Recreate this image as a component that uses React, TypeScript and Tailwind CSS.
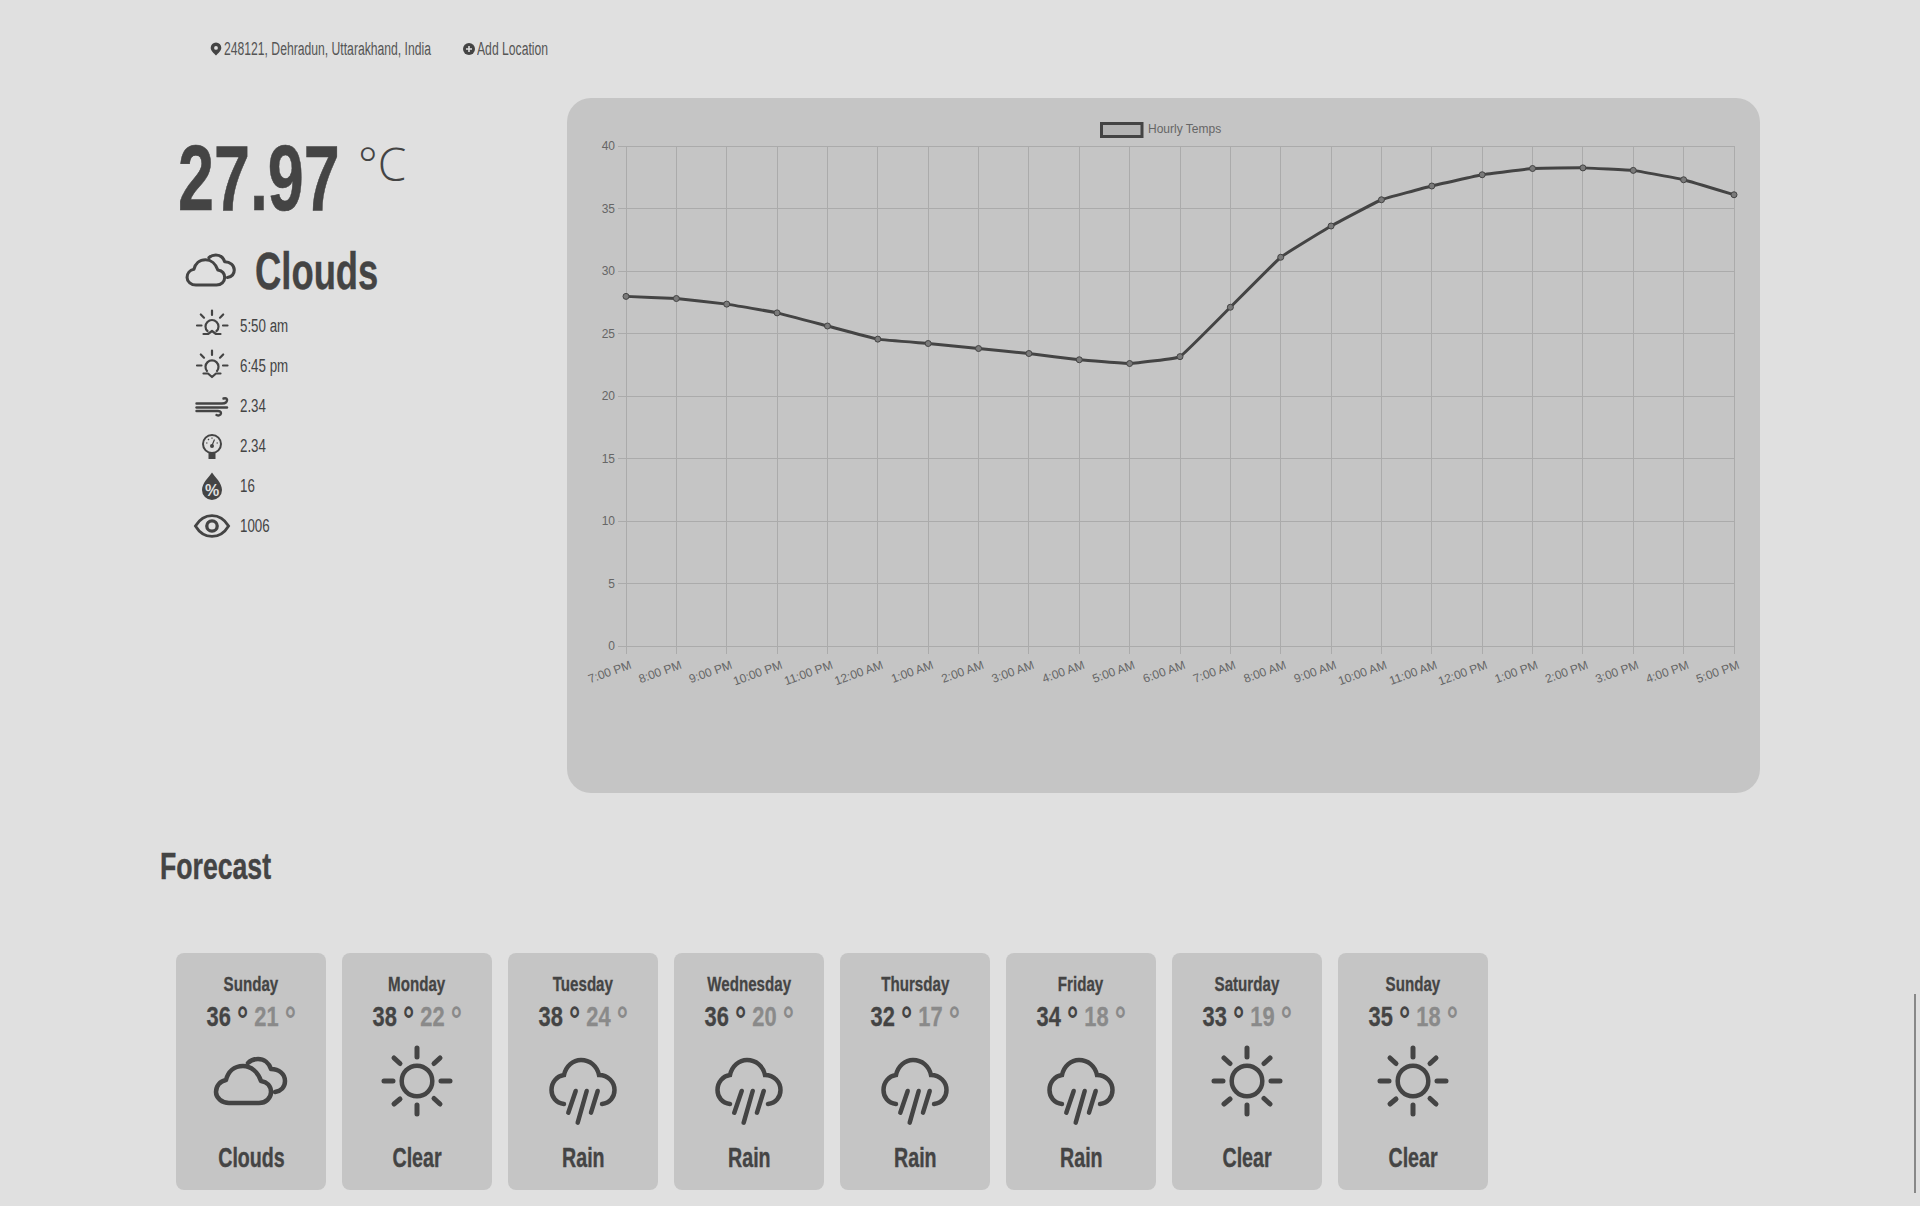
import React from "react";

const FONT = "font-['Liberation_Sans',Arial,sans-serif]";

const temps = [27.97, 27.8, 27.35, 26.65, 25.6, 24.55, 24.2, 23.8, 23.4, 22.9, 22.6, 23.15, 27.1, 31.1, 33.6, 35.7, 36.8, 37.7, 38.2, 38.25, 38.05, 37.3, 36.1];
const hours = ["7:00 PM", "8:00 PM", "9:00 PM", "10:00 PM", "11:00 PM", "12:00 AM", "1:00 AM", "2:00 AM", "3:00 AM", "4:00 AM", "5:00 AM", "6:00 AM", "7:00 AM", "8:00 AM", "9:00 AM", "10:00 AM", "11:00 AM", "12:00 PM", "1:00 PM", "2:00 PM", "3:00 PM", "4:00 PM", "5:00 PM"];
const X0 = 626, X1 = 1734, Y0 = 646, Y40 = 146;
const px = (i: number) => X0 + ((X1 - X0) * i) / 22;
const py = (t: number) => Y0 - ((Y0 - Y40) * t) / 40;

function linePath() {
  const pts = temps.map((t, i) => [px(i), py(t)]);
  const k = 0.04;
  let d = `M${pts[0][0]} ${pts[0][1]}`;
  for (let i = 0; i < pts.length - 1; i++) {
    const p0 = pts[Math.max(i - 1, 0)], p1 = pts[i], p2 = pts[i + 1], p3 = pts[Math.min(i + 2, pts.length - 1)];
    d += ` C${p1[0] + (p2[0] - p0[0]) * k} ${p1[1] + (p2[1] - p0[1]) * k} ${p2[0] - (p3[0] - p1[0]) * k} ${p2[1] - (p3[1] - p1[1]) * k} ${p2[0]} ${p2[1]}`;
  }
  return d;
}

function Chart() {
  const grid = "#ababab";
  return (
    <svg viewBox="567 98 1193 695" className="block w-full h-full" fontFamily="'Liberation Sans',sans-serif" fontSize="12" fill="#666">
      <rect x="1101.5" y="123.5" width="40.5" height="13" fill="#b4b4b4" stroke="#444" strokeWidth="3" />
      <text x="1148" y="133">Hourly Temps</text>
      {[0, 5, 10, 15, 20, 25, 30, 35, 40].map((t) => (
        <g key={t}>
          <line x1={X0 - 8} x2={X1} y1={Math.floor(py(t)) + 0.5} y2={Math.floor(py(t)) + 0.5} stroke={grid} />
          <text x="615" y={py(t) + 4} textAnchor="end">{t}</text>
        </g>
      ))}
      {hours.map((h, i) => (
        <g key={h + i}>
          <line x1={Math.floor(px(i)) + 0.5} x2={Math.floor(px(i)) + 0.5} y1={Y40} y2={Y0 + 8} stroke={grid} />
          <text transform={`translate(${px(i) + 5} 665) rotate(-20)`} textAnchor="end" dominantBaseline="middle">{h}</text>
        </g>
      ))}
      <path d={linePath()} fill="none" stroke="#444" strokeWidth="3" />
      {temps.map((t, i) => (
        <circle key={i} cx={px(i)} cy={py(t)} r="3" fill="#7a7a7a" stroke="#444" strokeWidth="1" />
      ))}
    </svg>
  );
}

const Sun = () => (
  <svg viewBox="0 0 76 76" className="w-[76px] h-[76px] overflow-visible" fill="none" stroke="#444" strokeWidth="5" strokeLinecap="round">
    <circle cx="38" cy="38" r="15.3" strokeWidth="4.5" />
    <path d="M38 5V14M38 62V71M5 38H14M62 38H71M15 15L21 20.5M55 55.5L61 61M15 61L21 56M55 20.5L61 15" />
  </svg>
);
const Clouds = ({ className = "w-[76px] h-[76px]" }: { className?: string }) => (
  <svg viewBox="0 0 76 76" className={className + " overflow-visible"} fill="none" stroke="#444" strokeWidth="4.5" strokeLinecap="round" strokeLinejoin="round">
    <path d="M16 60H46C53 60 58 55 58 49C58 43 54 39 48 38C45 29 38 23 30 23C21 23 15 29 13 37C7 38 3 43 3 49C3 55 9 60 16 60Z" />
    <path d="M35 20C38 17 42 16 45 16C51 16 56 20 58 26C66 26 72 31 72 38C72 44 68 48 62 49" />
  </svg>
);
const Rain = () => (
  <svg viewBox="0 0 76 76" className="w-[76px] h-[76px] overflow-visible" fill="none" stroke="#444" strokeWidth="4.5" strokeLinecap="round">
    <path d="M19 61C11 60 6.5 54 6.5 47C6.5 39 12 33 19 32C21 23 28 17 36 17C45 17 52 23 54 32C63 32 69.5 39 69.5 47C69.5 54 65 60 57 61" />
    <path d="M30.7 48L23.3 69.7M41.7 48L32.7 79.7M52.7 48L46 69.7" />
  </svg>
);

const Sunrise = () => (
  <svg viewBox="0 0 34 34" className="w-[34px] h-[34px]" fill="none" stroke="#444" strokeWidth="2.2" strokeLinecap="round" strokeLinejoin="round">
    <path d="M17 1.5V6M2 16.5H6.5M28 16.5H32.5M5.8 5.5L9 8.7M28.2 5.5L25 8.7" />
    <path d="M12.5 22C10.5 20.5 10.5 19 10.5 17.5A6.5 6.5 0 0 1 23.5 17.5C23.5 19 23.5 20.5 21.5 22" />
    <path d="M8.5 25H13L17 22L21 25H25.5" />
  </svg>
);
const Sunset = () => (
  <svg viewBox="0 0 34 34" className="w-[34px] h-[34px]" fill="none" stroke="#444" strokeWidth="2.2" strokeLinecap="round" strokeLinejoin="round">
    <path d="M17 1.5V6M2 16.5H6.5M28 16.5H32.5M5.8 5.5L9 8.7M28.2 5.5L25 8.7" />
    <path d="M12 22A6.5 6.5 0 1 1 22 22" />
    <path d="M8.5 24.5H13L17 28L21 24.5H25.5" />
  </svg>
);
const Wind = () => (
  <svg viewBox="0 0 34 34" className="w-[34px] h-[34px]" fill="none" stroke="#444" strokeWidth="2.4" strokeLinecap="round">
    <path d="M1.5 14.5H27C31 14.5 32.5 12.5 32 10.5C31.5 9 30 9 28.5 9.5" />
    <path d="M1.5 18.5H32" />
    <path d="M1.5 22H23C26 22 26.5 24 25.5 25.5C24.5 26.5 22.5 26.5 21.5 26" />
  </svg>
);
const Gauge = () => (
  <svg viewBox="0 0 34 34" className="w-[34px] h-[34px]">
    <circle cx="17" cy="15" r="9" fill="none" stroke="#444" strokeWidth="2" />
    <rect x="13.5" y="24" width="7" height="6" fill="#444" />
    <path d="M17 16.5L19.5 10.5M11 14H12.5M21.5 14H23M17 8.5V9.8M13 10L14 11" stroke="#444" strokeWidth="1.2" fill="none" />
    <circle cx="17" cy="17" r="2" fill="#444" />
  </svg>
);
const Drop = () => (
  <svg viewBox="0 0 34 34" className="w-[34px] h-[34px]">
    <path d="M17 3.5C20 8 27 14 27 21A10 10 0 0 1 7 21C7 14 14 8 17 3.5Z" fill="#444" />
    <text x="17" y="27" textAnchor="middle" fontSize="16" fontWeight="700" fontFamily="'Liberation Sans',sans-serif" fill="#e0e0e0">%</text>
  </svg>
);
const Eye = () => (
  <svg viewBox="0 0 38 34" className="w-[36px] h-[34px] overflow-visible" fill="none" stroke="#444">
    <path d="M1.5 17C6 9.5 12 6 19 6C26 6 32 9.5 36.5 17C32 24.5 26 28 19 28C12 28 6 24.5 1.5 17Z" strokeWidth="3" />
    <circle cx="19" cy="17" r="5.5" strokeWidth="3.5" />
  </svg>
);

const details: [React.ReactNode, string][] = [
  [<Sunrise />, "5:50 am"],
  [<Sunset />, "6:45 pm"],
  [<Wind />, "2.34"],
  [<Gauge />, "2.34"],
  [<Drop />, "16"],
  [<Eye />, "1006"],
];

const days: [string, number, number, string][] = [
  ["Sunday", 36, 21, "Clouds"],
  ["Monday", 38, 22, "Clear"],
  ["Tuesday", 38, 24, "Rain"],
  ["Wednesday", 36, 20, "Rain"],
  ["Thursday", 32, 17, "Rain"],
  ["Friday", 34, 18, "Rain"],
  ["Saturday", 33, 19, "Clear"],
  ["Sunday", 35, 18, "Clear"],
];

const Deg = () => <span className="relative top-[6px] text-[36px] leading-[0] [-webkit-text-stroke:0px]">°</span>;

export default function App() {
  return (
    <div className={`relative h-[1206px] overflow-hidden bg-[#e0e0e0] text-[#444] ${FONT}`}>
      <header className="flex h-[98px] items-center pl-[210px] text-[18px] leading-none">
        <div className="flex items-center gap-[2px]">
          <svg viewBox="0 0 12 14" className="h-[14px] w-[12px] shrink-0">
            <path fillRule="evenodd" d="M6 0.5A5.3 5.3 0 0 1 11.3 5.8C11.3 9 8 11.5 6 13.5C4 11.5 .7 9 .7 5.8A5.3 5.3 0 0 1 6 0.5ZM6 4A1.9 1.9 0 1 0 6 7.8A1.9 1.9 0 1 0 6 4Z" fill="#444" />
          </svg>
          <span className="block w-[207px] origin-left scale-x-[0.676] whitespace-nowrap text-[#555]">248121, Dehradun, Uttarakhand, India</span>
        </div>
        <div className="ml-[32px] flex items-center gap-[2px]">
          <svg viewBox="0 0 12 12" className="h-[12px] w-[12px] shrink-0">
            <circle cx="6" cy="6" r="6" fill="#444" />
            <path d="M6 3V9M3 6H9" stroke="#e0e0e0" strokeWidth="1.6" />
          </svg>
          <span className="block w-[69px] origin-left scale-x-[0.676] whitespace-nowrap text-[#555]">Add Location</span>
        </div>
      </header>

      <main className="flex h-[695px]">
        <section className="w-[567px] shrink-0 pl-[178px] pt-[35px]">
          <div className="flex items-start">
            <span className="block w-[159px] origin-left scale-x-[0.695] whitespace-nowrap text-[93px] font-bold leading-[90px] [-webkit-text-stroke:0.6px]">27.97</span>
            <span className="ml-[21px] font-['Open_Sans',sans-serif] text-[46px] font-light leading-[60px]">°C</span>
          </div>
          <div className="mt-[23px] flex h-[50px] items-center pl-[7px]">
            <Clouds className="-mt-[3px] h-[52px] w-[52px]" />
            <span className="ml-[18px] origin-left scale-x-[0.70] whitespace-nowrap text-[52px] font-bold leading-none [-webkit-text-stroke:0.4px]">Clouds</span>
          </div>
          <ul className="mt-[10px] flex flex-col pl-[13px]">
            {details.map(([icon, text], i) => (
              <li key={i} className="flex h-[40px] items-center">
                <span className="flex w-[42px] justify-center">{icon}</span>
                <span className="ml-[7px] origin-left scale-x-[0.74] whitespace-nowrap text-[18px] leading-none">{text}</span>
              </li>
            ))}
          </ul>
        </section>
        <section className="w-[1193px] shrink-0 overflow-hidden rounded-[24px] bg-[#c5c5c5]">
          <Chart />
        </section>
      </main>

      <h2 className="origin-left translate-x-[160px] scale-x-[0.74] whitespace-nowrap pt-[52px] text-[36px] font-bold leading-[44px] [-webkit-text-stroke:0.4px]">Forecast</h2>

      <section className="mt-[64px] flex gap-[16px] pl-[176px]">
        {days.map(([day, hi, lo, label], i) => (
          <article key={i} className="flex h-[237px] w-[150px] flex-col items-center rounded-[8px] bg-[#c5c5c5] pt-[19px]">
            <div className="scale-x-[0.72] whitespace-nowrap text-[21px] font-bold leading-[24px] [-webkit-text-stroke:0.3px]">{day}</div>
            <div className="mt-[5px] scale-x-[0.78] whitespace-nowrap text-[28px] font-bold leading-[32px] [-webkit-text-stroke:0.3px]">
              {hi} <Deg /> <span className="text-[#8a8a8a]">{lo} <Deg /></span>
            </div>
            <div className="mt-[10px] flex h-[76px] justify-center">
              {label === "Clouds" ? <Clouds /> : label === "Clear" ? <Sun /> : <Rain />}
            </div>
            <div className="mt-[23px] scale-x-[0.70] whitespace-nowrap text-[28px] font-bold leading-[32px] [-webkit-text-stroke:0.4px]">{label}</div>
          </article>
        ))}
      </section>

      <div className="absolute left-[1914px] top-[994px] h-[199px] w-[2px] bg-[#888]" />
    </div>
  );
}
